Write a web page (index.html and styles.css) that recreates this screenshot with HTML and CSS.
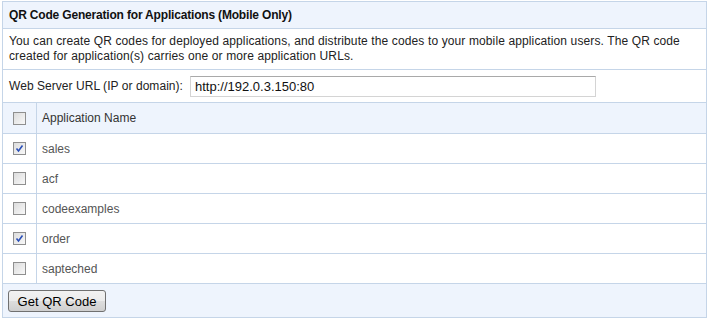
FILE: index.html
```html
<!DOCTYPE html>
<html lang="en">
<head>
  <meta charset="UTF-8">
  <title>QR Code Generation</title>
  <link rel="stylesheet" href="styles.css">
</head>
<body>
  <div class="panel">
    <div class="titulo">QR Code Generation for Applications (Mobile Only)</div>
    <div class="desc">You can create QR codes for deployed applications, and distribute the codes to your mobile application users. The QR code created for application(s) carries one or more application URLs.</div>
    <div class="url">
      <label for="server">Web Server URL (IP or domain):</label>
      <input id="server" type="text" value="http://192.0.3.150:80">
    </div>
    <table class="apps">
      <tr class="cabecera">
        <td class="col-check"><span class="cb"></span></td>
        <td>Application Name</td>
      </tr>
      <tr>
        <td class="col-check"><span class="cb on"><svg viewBox="0 0 9 9" width="9" height="9"><path d="M1.5 4.5 L3.5 7 L7.5 1.5" fill="none" stroke="#2a4fb8" stroke-width="1.6"/></svg></span></td>
        <td>sales</td>
      </tr>
      <tr>
        <td class="col-check"><span class="cb"></span></td>
        <td>acf</td>
      </tr>
      <tr>
        <td class="col-check"><span class="cb"></span></td>
        <td>codeexamples</td>
      </tr>
      <tr>
        <td class="col-check"><span class="cb on"><svg viewBox="0 0 9 9" width="9" height="9"><path d="M1.5 4.5 L3.5 7 L7.5 1.5" fill="none" stroke="#2a4fb8" stroke-width="1.6"/></svg></span></td>
        <td>order</td>
      </tr>
      <tr>
        <td class="col-check"><span class="cb"></span></td>
        <td>sapteched</td>
      </tr>
    </table>
    <div class="pie">
      <button>Get QR Code</button>
    </div>
  </div>
</body>
</html>
```

FILE: styles.css
```css
body {
  margin: 0;
  padding: 1px 1px 0 2px;
  font-family: "Liberation Sans", Arial, sans-serif;
  font-size: 12px;
  color: #222;
  background: white;
}
.panel {
  width: 703px;
  border: 1px solid #c5d5e8;
}
.titulo {
  height: 26px;
  line-height: 26px;
  padding-left: 6px;
  background: #eef4fd;
  border-bottom: 1px solid #c5d5e8;
  font-weight: bold;
  letter-spacing: -0.18px;
  color: #111;
}
.desc {
  padding: 5px 6px 5px 6px;
  line-height: 15px;
  letter-spacing: 0.12px;
  border-bottom: 1px solid #c5d5e8;
}
.url {
  display: flex;
  align-items: center;
  height: 32px;
  padding-left: 6px;
  border-bottom: 1px solid #c5d5e8;
}
.url label {
  margin-right: 7px;
  letter-spacing: 0.05px;
}
.url input {
  width: 406px;
  height: 21px;
  box-sizing: border-box;
  margin: 0;
  padding: 0 4px;
  border: 1px solid #d4d4d4;
  border-top-color: #a9a9a9;
  font-family: inherit;
  font-size: 13px;
  color: #111;
}
.apps {
  width: 100%;
  border-collapse: collapse;
}
.apps td {
  height: 29px;
  padding: 0 0 0 5px;
  border-top: 1px solid #c5d5e8;
  border-left: 1px solid #c5d5e8;
  color: #555;
}
.apps tr:first-child td {
  border-top: none;
}
.apps td:first-child {
  border-left: none;
}
.apps .cabecera td {
  background: #eef4fd;
  height: 30px;
  color: #333;
}
.apps .col-check {
  width: 28px;
  padding-left: 5px;
}
.cb {
  display: block;
  width: 11px;
  height: 11px;
  margin-left: 5px;
  border: 1px solid #8f8f8f;
  background: linear-gradient(135deg, #dcdcdc, #f8f8f8);
  position: relative;
}
.cb svg {
  position: absolute;
  left: 1px;
  top: 1px;
}
.pie {
  background: #eef4fd;
  border-top: 1px solid #c5d5e8;
  padding: 6px 5px 5px 5px;
}
.pie button {
  width: 98px;
  height: 22px;
  margin: 0;
  padding: 0;
  border: 1px solid #707070;
  border-radius: 3px;
  background: linear-gradient(#f2f2f2, #ebebeb 50%, #dddddd 51%, #cfcfcf);
  font-family: inherit;
  font-size: 13px;
  color: #000;
}
```
